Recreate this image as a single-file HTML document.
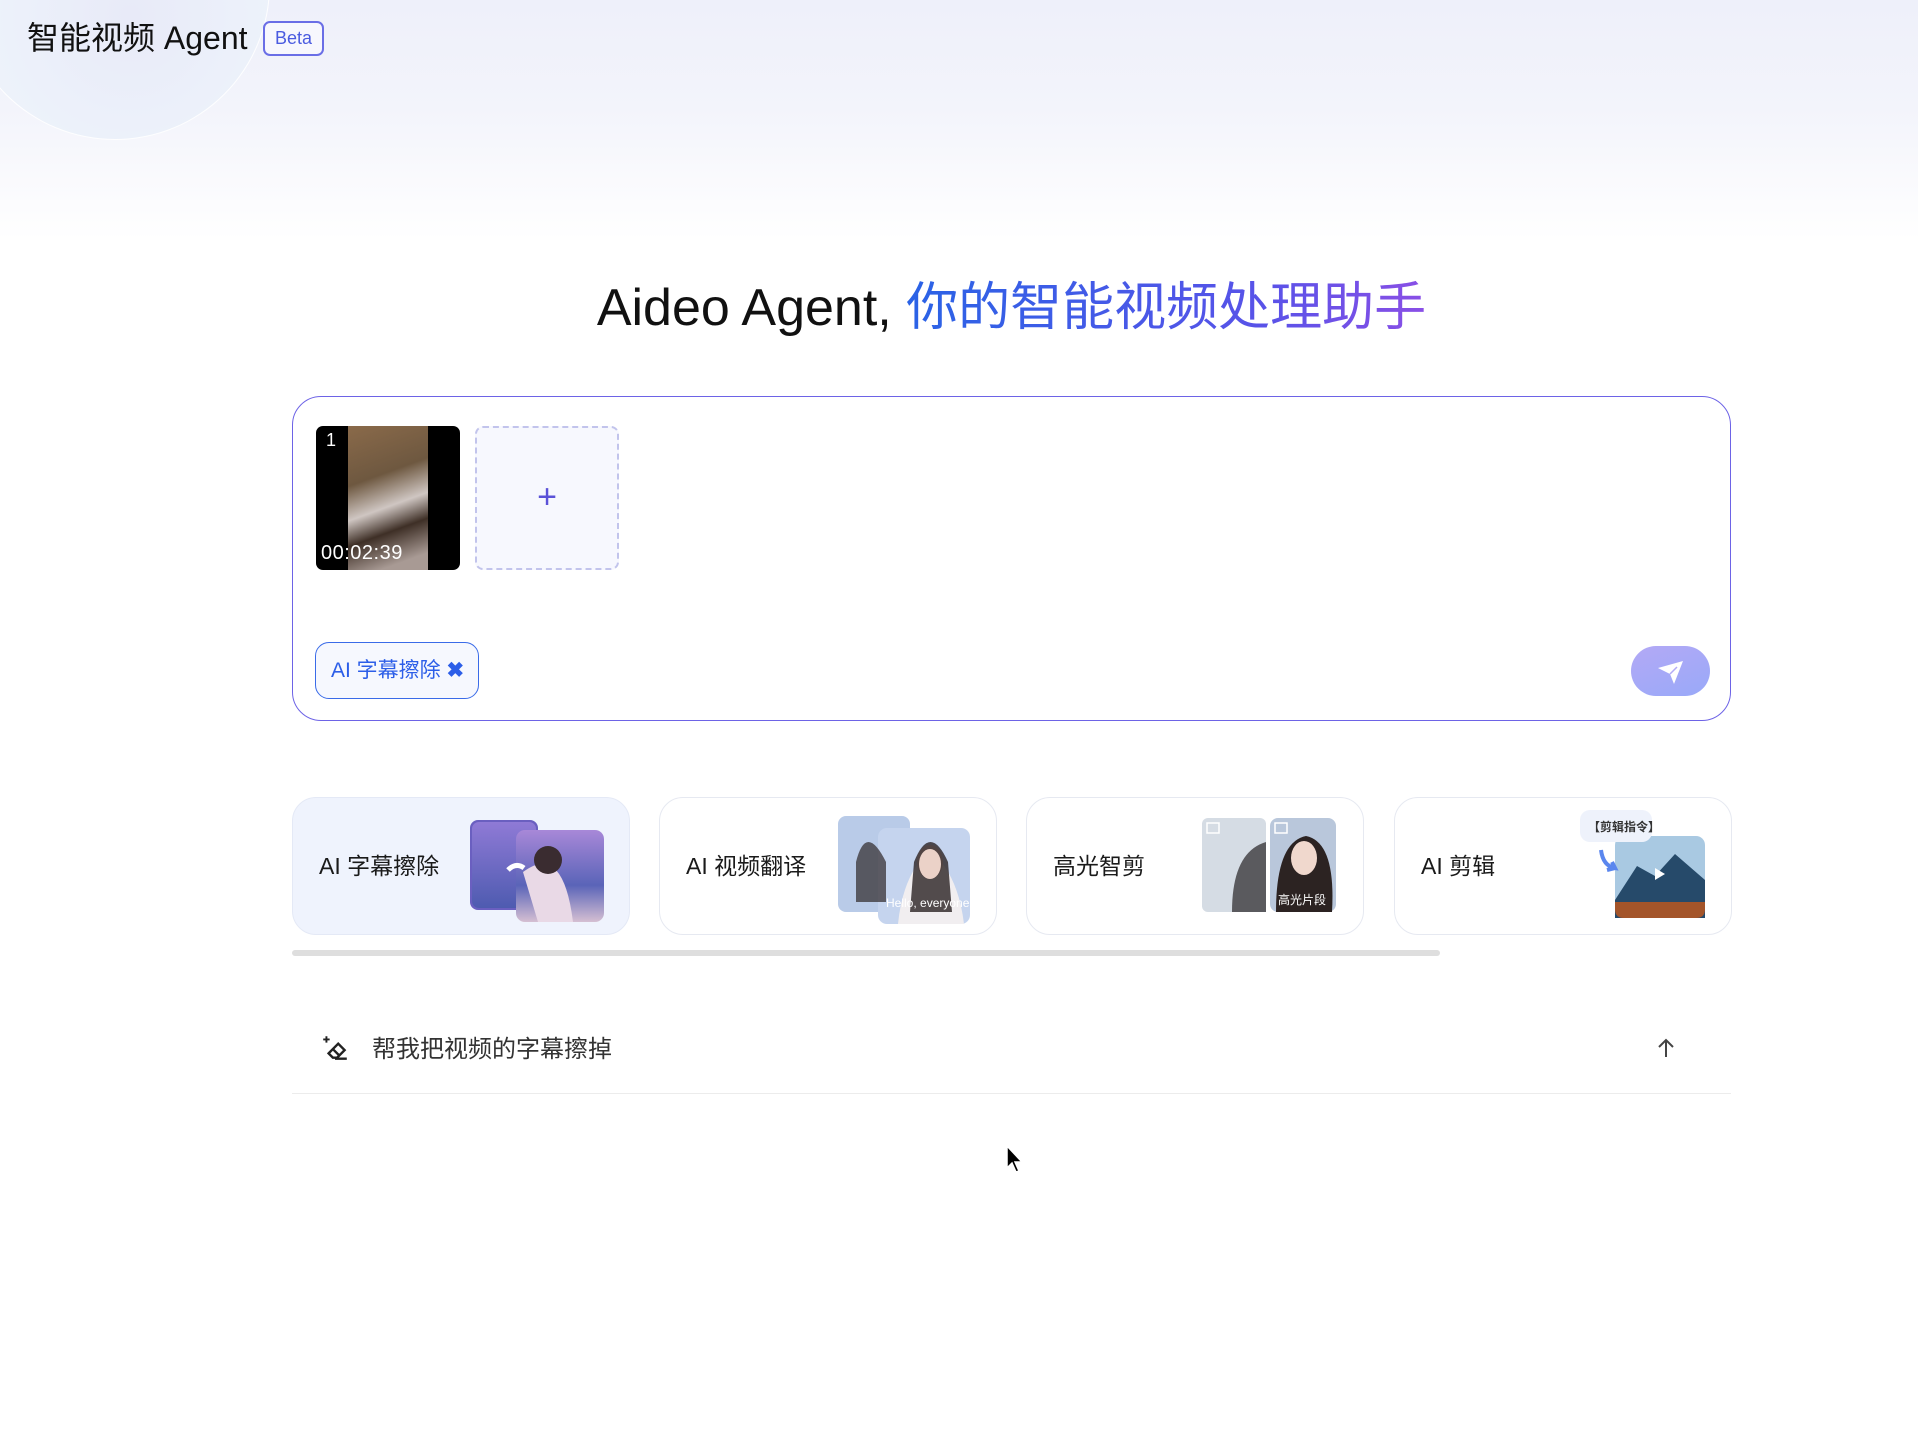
<!DOCTYPE html>
<html><head><meta charset="utf-8"><style>
*{margin:0;padding:0;box-sizing:border-box}
html,body{width:1918px;height:1446px;overflow:hidden;background:#fff;font-family:"Liberation Sans","Noto Sans CJK SC",sans-serif;position:relative}
.hdr{position:absolute;left:0;top:0;width:1918px;height:240px;background:linear-gradient(180deg,#eef0fa 0%,#f3f4fb 45%,#fff 100%)}
.circ{position:absolute;left:-40px;top:-170px;width:310px;height:310px;border-radius:50%;background:radial-gradient(circle at 55% 60%,#e8eaf8,#eef4fb 70%);border:1.5px solid rgba(255,255,255,.9)}
.title{position:absolute;left:27px;top:16px;font-size:32px;color:#111;line-height:44px}
.beta{position:absolute;left:263px;top:21px;width:61px;height:35px;border:2px solid #6a6ee6;border-radius:7px;color:#4a5be0;font-size:18px;text-align:center;line-height:31px;background:#f7f7fd}
h1{position:absolute;left:292px;width:1439px;top:272px;text-align:center;font-weight:400;font-size:52px;color:#111;line-height:72px}
h1 span{background:linear-gradient(90deg,#2a63e6,#5a52e8 70%,#8a4fe6);-webkit-background-clip:text;color:transparent}
.box{position:absolute;left:292px;top:396px;width:1439px;height:325px;border:1.5px solid #6d63e6;border-radius:29px;background:#fff}
.thumb{position:absolute;left:316px;top:426px;width:144px;height:144px;border-radius:7px;background:#000;overflow:hidden}
.thumb .img{position:absolute;left:32px;top:0;width:80px;height:144px;background:linear-gradient(160deg,#8a6a4a,#6e5840 35%,#cfc6c2 55%,#3e2f26 70%,#a89a94 90%)}
.thumb .n{position:absolute;left:10px;top:4px;color:#fff;font-size:18px}
.thumb .t{position:absolute;left:5px;bottom:5px;color:#fff;font-size:20px;letter-spacing:.5px}
.add{position:absolute;left:475px;top:426px;width:144px;height:144px;border:2px dashed #c2c4ec;border-radius:8px;background:#f7f8fe;color:#5b52d8;font-size:34px;text-align:center;line-height:138px;font-weight:300}
.tag{position:absolute;left:315px;top:642px;width:164px;height:57px;border:1.5px solid #3a6be8;border-radius:14px;background:#f6f8fe;color:#2c5ee8;font-size:21px;line-height:56px;padding-left:15px;white-space:nowrap}
.send{position:absolute;left:1631px;top:646px;width:79px;height:50px;border-radius:25px;background:linear-gradient(160deg,#b3a9f6,#99a9f8)}
.card{position:absolute;top:797px;width:338px;height:138px;border-radius:24px;border:1.5px solid #e6e9f1;background:#fff}
.card .l{position:absolute;left:26px;top:49px;font-size:23px;color:#1a1a1a}
.card.a{background:#eff3fd;border-color:#e4e9f6}
.sb{position:absolute;left:292px;top:950px;width:1148px;height:6px;border-radius:3px;background:#dedede}
.sug{position:absolute;left:292px;top:1020px;width:1439px;height:74px;border-bottom:1.5px solid #ececec}
.sug .tx{position:absolute;left:80px;top:9px;font-size:24px;color:#333}
</style></head><body>
<div class="hdr"><div class="circ"></div></div>
<div class="title">智能视频 Agent</div>
<div class="beta">Beta</div>
<h1>Aideo Agent, <span>你的智能视频处理助手</span></h1>
<div class="box"></div>
<div class="thumb"><div class="img"></div><div class="n">1</div><div class="t">00:02:39</div></div>
<div class="add">+</div>
<div class="tag">AI 字幕擦除 <b>✖</b></div>
<div class="send"><svg width="79" height="50" viewBox="0 0 79 50"><path d="M27 22 L52 15 L43 38 L39 28 Z" fill="#fff"/><path d="M39 28 L46 21" stroke="#b3aaf6" stroke-width="1.5"/></svg></div>

<div class="card a" style="left:292px"><div class="l">AI 字幕擦除</div>
<svg style="position:absolute;left:175px;top:14px" width="140" height="112"><rect x="2" y="8" width="68" height="90" rx="8" fill="#6a5fc0"/><rect x="4" y="10" width="64" height="86" rx="7" fill="url(#g1)"/><rect x="48" y="18" width="88" height="92" rx="9" fill="url(#g2)"/><path d="M55 60 q40 -30 50 50 L70 110 Z" fill="#e9d9e6"/><circle cx="80" cy="48" r="14" fill="#3a2c30"/><path d="M40 58 q8 -8 16 -2" stroke="#fff" stroke-width="5" fill="none"/>
<defs><linearGradient id="g1" x1="0" y1="0" x2="0" y2="1"><stop offset="0" stop-color="#8f7ad6"/><stop offset="1" stop-color="#4e5bb0"/></linearGradient><linearGradient id="g2" x1="0" y1="0" x2="0" y2="1"><stop offset="0" stop-color="#a888d8"/><stop offset=".6" stop-color="#5a64b8"/><stop offset="1" stop-color="#d5bfd2"/></linearGradient></defs></svg></div>

<div class="card" style="left:659px"><div class="l">AI 视频翻译</div>
<svg style="position:absolute;left:176px;top:14px" width="140" height="112"><rect x="2" y="4" width="72" height="96" rx="8" fill="#b9cbe8"/><rect x="42" y="16" width="92" height="96" rx="9" fill="#c5d4ee"/><path d="M62 112 q5 -50 32 -74 q28 24 34 74 Z" fill="#f1eef0"/><ellipse cx="94" cy="50" rx="13" ry="17" fill="#e9cdc3"/><path d="M78 50 q16 -40 34 0 l4 50 l-42 0 Z" fill="#2a2223" opacity=".8"/><ellipse cx="94" cy="52" rx="11" ry="15" fill="#ebd2c8"/><path d="M20 50 q10 -40 30 0 l0 40 l-30 0 Z" fill="#2e2628" opacity=".7"/><text x="50" y="95" font-size="12" fill="#fff" font-family="Liberation Sans">Hello, everyone.</text></svg></div>

<div class="card" style="left:1026px"><div class="l">高光智剪</div>
<svg style="position:absolute;left:175px;top:20px" width="140" height="96"><rect x="0" y="0" width="64" height="94" rx="6" fill="#d5dce4"/><path d="M30 94 q0 -60 34 -70 l0 70 Z" fill="#5a5a5e"/><rect x="68" y="0" width="66" height="94" rx="8" fill="#b9c7db"/><path d="M74 94 q0 -70 30 -76 q30 6 26 76 Z" fill="#2c2322"/><ellipse cx="102" cy="40" rx="13" ry="17" fill="#f0d8cd"/><rect x="5" y="5" width="12" height="10" fill="none" stroke="#fff" stroke-width="1.5"/><rect x="73" y="5" width="12" height="10" fill="none" stroke="#fff" stroke-width="1.5"/><text x="76" y="86" font-size="12" fill="#fff" font-family="Noto Sans CJK SC">高光片段</text></svg></div>

<div class="card" style="left:1394px"><div class="l">AI 剪辑</div>
<svg style="position:absolute;left:180px;top:12px" width="150" height="110"><rect x="40" y="26" width="90" height="82" rx="9" fill="#a9c9e2"/><path d="M40 90 L62 56 L80 66 L100 44 L130 70 L130 108 L40 108 Z" fill="#264a6a"/><path d="M40 92 L130 92 L130 99 q0 9 -9 9 L49 108 q-9 0 -9 -9 Z" fill="#a4552a"/><rect x="5" y="0" width="72" height="32" rx="10" fill="#eef2fb"/><text x="13" y="21" font-size="12" font-weight="bold" fill="#333" font-family="Noto Sans CJK SC">【剪辑指令】</text><path d="M26 40 q2 16 14 18 l-3 -6 M40 58 l-8 2" stroke="#5a86ee" stroke-width="4" fill="none"/><path d="M80 58 l10 6 l-10 6 Z" fill="#fff"/></svg></div>

<div class="sb"></div>
<div class="sug">
<svg style="position:absolute;left:28px;top:13px" width="30" height="30" viewBox="0 0 28 28" fill="none" stroke="#222" stroke-width="2.2"><path d="M8 19 L17 10 L23 16 L16 23 L12 23 Z M12 15 L18 21 M14 24 L25 24"/><path d="M6 3 v6 M3 6 h6" stroke-width="1.8"/></svg>
<div class="tx">帮我把视频的字幕擦掉</div>
<svg style="position:absolute;left:1365px;top:18px" width="18" height="20" viewBox="0 0 18 20" fill="none" stroke="#444" stroke-width="2"><path d="M9 19 V2 M2 9 L9 2 L16 9"/></svg>
</div>
<svg style="position:absolute;left:1006px;top:1145px" width="20" height="30" viewBox="0 0 20 30"><path d="M1 1 L1 23 L6 18 L10 27 L13 26 L9 17 L16 17 Z" fill="#000" stroke="#fff" stroke-width="1.5"/></svg>
</body></html>
